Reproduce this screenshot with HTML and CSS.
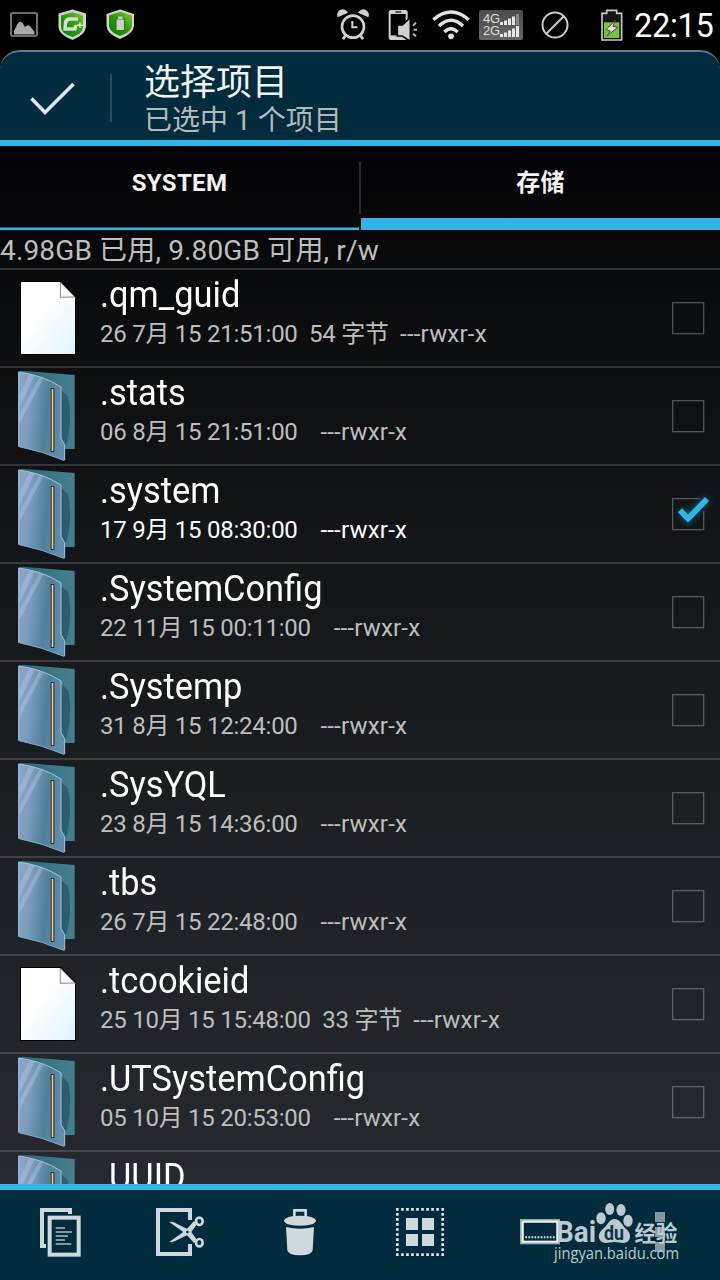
FILE: index.html
```html
<!DOCTYPE html>
<html lang="zh-CN">
<head>
  <meta charset="UTF-8">
  <title>选择项目</title>
  <link rel="stylesheet" href="styles.css">
</head>
<body>

  <!-- Shared icons -->
  <svg class="defs" width="0" height="0">
    <defs>
      <linearGradient id="front" x1="0" y1="0.1" x2="1" y2="0.3">
        <stop offset="0" stop-color="#8ba6cc"/>
        <stop offset="0.3" stop-color="#7b9bbd"/>
        <stop offset="0.65" stop-color="#4f8099"/>
        <stop offset="1" stop-color="#5f8eae"/>
      </linearGradient>
      <linearGradient id="back" x1="0" y1="0" x2="1" y2="0">
        <stop offset="0" stop-color="#2a6670"/>
        <stop offset="0.75" stop-color="#417a8a"/>
        <stop offset="1" stop-color="#457e8e"/>
      </linearGradient>
      <linearGradient id="paper" x1="0" y1="0" x2="1" y2="1">
        <stop offset="0.4" stop-color="#ffffff"/>
        <stop offset="1" stop-color="#e0f3ff"/>
      </linearGradient>
      <linearGradient id="shield-green" x1="0" y1="1" x2="1" y2="0">
        <stop offset="0" stop-color="#0d7a08"/>
        <stop offset="0.5" stop-color="#2a980d"/>
        <stop offset="1" stop-color="#7fc626"/>
      </linearGradient>
      <filter id="glow" x="-50%" y="-50%" width="200%" height="200%">
        <feGaussianBlur stdDeviation="9"/>
      </filter>
    </defs>
    <symbol id="folder" viewBox="0 0 240 288">
      <path d="M56 10L68 8L224 21V243H190L150 100Z" fill="url(#back)"/>
      <path d="M183 66L204 84Q212 120 210 160Q208 205 196 236L184 210Z" fill="#265660" opacity="0.75"/>
      <path d="M56 12Q130 22 183 57V212L194 230V278Q125 250 56 236Z" fill="url(#front)"/>
      <path d="M58 80L88 19L104 22L58 118ZM58 140L118 27L130 31L58 168Z" fill="#b9c9e6" opacity="0.4"/>
      <path d="M56 236V12Q130 22 183 57V212L194 230V276" fill="none" stroke="#a8c4df" stroke-width="3"/>
      <path d="M58 236Q125 249 192 277" fill="none" stroke="#7fa8cb" stroke-width="3"/>
      <rect x="152" y="60" width="11" height="192" rx="3" fill="#1c262e"/>
      <rect x="155" y="63" width="5" height="186" fill="#ffcb83"/>
    </symbol>
    <symbol id="file" viewBox="0 0 240 288">
      <path d="M60 33H184L228 80V255H60Z" fill="#000"/>
      <path d="M63 36H181L225 82V252H63Z" fill="url(#paper)"/>
      <path d="M181 36L225 81L181 82Z" fill="#f4f4f4" stroke="#555" stroke-width="2"/>
      <path d="M184 42L184 75L214 78Z" fill="#fff"/>
    </symbol>
    <symbol id="box" viewBox="0 0 144 144">
      <rect x="2" y="26" width="93" height="93" fill="none" stroke="#fff" stroke-opacity="0.28" stroke-width="4"/>
    </symbol>
    <symbol id="box-checked" viewBox="156 60 144 144">
      <path d="M182 122L204 146L261 86" fill="none" stroke="#087a9f" stroke-width="24" opacity="0.65" filter="url(#glow)"/>
      <path d="M239 86H158V179H251V124" fill="none" stroke="#56595b" stroke-width="4"/>
      <path d="M180 121L204 146L261 87" fill="none" stroke="#33b5e5" stroke-width="17"/>
    </symbol>
  </svg>

  <div class="status-bar">
    <div class="notifications">
      <svg width="28" height="32" viewBox="0 0 28 32">
        <rect x="1" y="4" width="26" height="23" rx="1" fill="none" stroke="#8d8d8d" stroke-width="1.6"/>
        <path d="M4 25.500V22L7 16Q10 10.500 12.500 14L15 18Q18 15 20 17L24.500 23V25.500Z" fill="#aaa"/>
      </svg>
      <svg width="28" height="32" viewBox="0 0 28 32">
        <path d="M14.500 0.500L28 4.500V18Q27 26 14.500 31Q1 26 0.500 18V4.500Z" fill="#cfd3cb"/>
        <path d="M14.500 3.300L25 6.500V18Q25 24.500 14.500 28Q3 24.500 3 18V6.500Z" fill="url(#shield-green)"/>
        <path d="M20 10H12Q8 10 7.500 14L7 20H17L17.700 16" fill="none" stroke="#d8ddd5" stroke-width="3.300"/>
        <path d="M22 13.500V19M19 16.200H25" stroke="#e6ebe3" stroke-width="1.500"/>
      </svg>
      <svg width="28" height="32" viewBox="0 0 28 32">
        <path d="M14 0.500L28 5V17Q27 25 14 30Q1 25 0.500 17V5Z" fill="#cfd3cb"/>
        <path d="M14 2.800L26 6.500V17Q25 23.500 14 27Q4 23.500 3 17V6.500Z" fill="url(#shield-green)"/>
        <rect x="10" y="10" width="8.500" height="11.500" fill="#c9d3c4" stroke="#2a6e1a"/>
        <rect x="12" y="7.600" width="4.500" height="2.400" fill="#c9d3c4"/>
      </svg>
    </div>
    <div class="signals">
      <svg class="alarm" width="32" height="32" viewBox="0 0 96 96">
        <g fill="none" stroke="#d0d0d0">
          <circle cx="48" cy="53" r="33" stroke-width="8"/>
          <path d="M46 36V55H61" stroke-width="6"/>
          <path d="M25 80L18 91M71 80L78 91" stroke-width="8"/>
        </g>
        <path d="M2 25A15 15 0 0 1 33 11ZM94 25A15 15 0 0 0 63 11Z" fill="#d0d0d0"/>
      </svg>
      <svg class="phone" width="30" height="32" viewBox="0 0 90 96">
        <rect x="2" y="3" width="57" height="90" rx="7" fill="#d0d0d0"/>
        <rect x="8" y="15" width="45" height="64" fill="#000"/>
        <rect x="22" y="7" width="18" height="4" fill="#111"/>
        <path d="M28 48H43L67 25V97L43 81H28Z" fill="#d0d0d0" stroke="#000" stroke-width="5"/>
        <path d="M75 50L84 41M77 62H87M75 74L84 82" stroke="#bbb" stroke-width="6"/>
      </svg>
      <svg class="wifi" width="38" height="32" viewBox="0 0 114 96">
        <g fill="none" stroke="#e2e2e2" stroke-width="10">
          <path d="M4 32Q57 -14 110 32"/>
          <path d="M21 51Q57 17 93 51"/>
          <path d="M37 69Q57 49 77 69"/>
        </g>
        <circle cx="57" cy="82" r="8.500" fill="#e2e2e2"/>
      </svg>
      <div class="sim">
        <div class="sim-row">4G<svg width="20" height="11" viewBox="0 0 20 11"><path d="M0 8H3V11H0ZM4 6.500H7V11H4ZM8 4.500H11V11H8ZM12 2.500H15V11H12Z" fill="#e6e6e6"/><path d="M16 0H19V11H16Z" fill="#888"/></svg></div>
        <div class="sim-row">2G<svg width="20" height="11" viewBox="0 0 20 11"><path d="M0 8H3V11H0ZM4 6.500H7V11H4ZM8 4.500H11V11H8ZM12 2.500H15V11H12ZM16 0H19V11H16Z" fill="#e6e6e6"/></svg></div>
      </div>
      <svg class="blocked" width="28" height="32" viewBox="0 0 28 32">
        <circle cx="14" cy="16" r="12.500" fill="none" stroke="#ccc" stroke-width="2"/>
        <path d="M5.500 24.500L22.500 7.500" stroke="#ccc" stroke-width="2"/>
      </svg>
      <svg class="battery" width="22" height="32" viewBox="0 0 66 96">
        <path d="M3 13H17V4H47V13H62V93H3Z" fill="#151515" stroke="#c8c8c8" stroke-width="5"/>
        <rect x="9" y="40" width="46" height="47" fill="#79c142"/>
        <path d="M43 34L15 62L28 66L18 81L50 55L36 52Z" fill="#e4e4e4" stroke="#444" stroke-width="3"/>
      </svg>
      <span class="clock">22:15</span>
    </div>
  </div>

  <div class="header">
    <svg class="done" width="110" height="88" viewBox="0 52 110 88">
      <path d="M31.500 98.500L45 112.500L73.500 84" fill="none" stroke="#dfe4e6" stroke-width="3.600"/>
    </svg>
    <div class="header-divider"></div>
    <div class="titles">
      <div class="title">选择项目</div>
      <div class="subtitle">已选中 1 个项目</div>
    </div>
  </div>

  <div class="content">
    <div class="tabs">
      <div class="tab">SYSTEM</div>
      <div class="tab-divider"></div>
      <div class="tab active">存储</div>
    </div>
    <div class="summary">4.98GB 已用, 9.80GB 可用, r/w</div>

    <div class="list">
      <div class="row">
        <svg class="icon"><use href="#file"/></svg>
        <div class="info">
          <div class="name">.qm_guid</div>
          <div class="meta">26 7月 15 21:51:00  54 字节  <span class="perms">---rwxr-x</span></div>
        </div>
        <svg class="check"><use href="#box"/></svg>
      </div>
      <div class="row">
        <svg class="icon"><use href="#folder"/></svg>
        <div class="info">
          <div class="name">.stats</div>
          <div class="meta">06 8月 15 21:51:00    <span class="perms">---rwxr-x</span></div>
        </div>
        <svg class="check"><use href="#box"/></svg>
      </div>
      <div class="row selected">
        <svg class="icon"><use href="#folder"/></svg>
        <div class="info">
          <div class="name">.system</div>
          <div class="meta">17 9月 15 08:30:00    <span class="perms">---rwxr-x</span></div>
        </div>
        <svg class="check"><use href="#box-checked"/></svg>
      </div>
      <div class="row">
        <svg class="icon"><use href="#folder"/></svg>
        <div class="info">
          <div class="name">.SystemConfig</div>
          <div class="meta">22 11月 15 00:11:00    <span class="perms">---rwxr-x</span></div>
        </div>
        <svg class="check"><use href="#box"/></svg>
      </div>
      <div class="row">
        <svg class="icon"><use href="#folder"/></svg>
        <div class="info">
          <div class="name">.Systemp</div>
          <div class="meta">31 8月 15 12:24:00    <span class="perms">---rwxr-x</span></div>
        </div>
        <svg class="check"><use href="#box"/></svg>
      </div>
      <div class="row">
        <svg class="icon"><use href="#folder"/></svg>
        <div class="info">
          <div class="name">.SysYQL</div>
          <div class="meta">23 8月 15 14:36:00    <span class="perms">---rwxr-x</span></div>
        </div>
        <svg class="check"><use href="#box"/></svg>
      </div>
      <div class="row">
        <svg class="icon"><use href="#folder"/></svg>
        <div class="info">
          <div class="name">.tbs</div>
          <div class="meta">26 7月 15 22:48:00    <span class="perms">---rwxr-x</span></div>
        </div>
        <svg class="check"><use href="#box"/></svg>
      </div>
      <div class="row">
        <svg class="icon"><use href="#file"/></svg>
        <div class="info">
          <div class="name">.tcookieid</div>
          <div class="meta">25 10月 15 15:48:00  33 字节  <span class="perms">---rwxr-x</span></div>
        </div>
        <svg class="check"><use href="#box"/></svg>
      </div>
      <div class="row">
        <svg class="icon"><use href="#folder"/></svg>
        <div class="info">
          <div class="name">.UTSystemConfig</div>
          <div class="meta">05 10月 15 20:53:00    <span class="perms">---rwxr-x</span></div>
        </div>
        <svg class="check"><use href="#box"/></svg>
      </div>
      <div class="row">
        <svg class="icon"><use href="#folder"/></svg>
        <div class="info">
          <div class="name">.UUID</div>
        </div>
      </div>
    </div>
  </div>

  <div class="toolbar">
    <!-- Copy -->
    <svg class="tool" viewBox="0 120 360 270">
      <path d="M120 174H216V192H204V186H132V282H138V294H120Z" fill="#cfd8dc"/>
      <rect x="149" y="203" width="87" height="111" fill="none" stroke="#cfd8dc" stroke-width="12"/>
      <path d="M167 234H195M167 246H216M167 258H204M167 270H195M167 282H214" stroke="#aebdc3" stroke-width="5"/>
    </svg>
    <!-- Cut -->
    <svg class="tool" viewBox="360 120 360 270">
      <path d="M570 210V180H474V312H570V282" fill="none" stroke="#cfd8dc" stroke-width="12"/>
      <path d="M508 216Q520 214 530 221L570 241L591 270L582 279L558 252Z" fill="#cfd8dc"/>
      <path d="M508 276Q520 278 530 271L570 251L591 222L582 213L558 240Z" fill="#cfd8dc"/>
      <g fill="none" stroke="#cfd8dc" stroke-width="8">
        <ellipse cx="598" cy="214" rx="10" ry="11"/>
        <ellipse cx="598" cy="278" rx="10" ry="11"/>
      </g>
      <circle cx="562" cy="246" r="4" fill="#002c3d"/>
    </svg>
    <!-- Delete -->
    <svg class="tool" viewBox="720 120 360 270">
      <path d="M883 201V181H917V201" fill="none" stroke="#cfd8dc" stroke-width="8"/>
      <path d="M852 211Q856 197 900 197Q944 197 948 211Q948 227 900 227Q852 227 852 211Z" fill="#cfd8dc"/>
      <path d="M858 231Q900 241 942 231L938 300Q936 316 900 316Q864 316 862 300Z" fill="#cfd8dc"/>
    </svg>
    <!-- Select all -->
    <svg class="tool" viewBox="0 120 360 270">
      <rect x="112" y="178" width="136" height="136" fill="none" stroke="#dfe6e8" stroke-width="8" stroke-dasharray="8 7.111" stroke-dashoffset="4"/>
      <path d="M138 204H174V240H138ZM186 204H222V240H186ZM138 252H174V288H138ZM186 252H222V288H186Z" fill="#cfd8dc"/>
    </svg>
    <!-- Rename -->
    <svg class="tool" viewBox="360 120 360 270">
      <rect x="485" y="212" width="110" height="66" fill="none" stroke="#99a9b0" stroke-width="10"/>
      <rect x="488" y="215" width="104" height="60" fill="none" stroke="#f2f5f6" stroke-width="6"/>
      <path d="M496 262H584" stroke="#e8eeef" stroke-width="6" stroke-dasharray="5 4.200"/>
    </svg>
    <!-- More -->
    <svg class="tool" viewBox="720 120 360 270">
      <path d="M885 186H915V216H885ZM885 231H915V261H885ZM885 276H915V306H885Z" fill="#82979f"/>
    </svg>

    <div class="watermark">
      <svg width="140" height="72" viewBox="550 1200 140 72">
        <g fill="#bdc9ce">
          <text class="wm-latin" x="556" y="1242" textLength="40" lengthAdjust="spacingAndGlyphs">Bai</text>
          <ellipse cx="601" cy="1218.300" rx="4.700" ry="6"/>
          <ellipse cx="609.700" cy="1209" rx="4.500" ry="6"/>
          <ellipse cx="621" cy="1210" rx="4.600" ry="6"/>
          <ellipse cx="628" cy="1220.700" rx="4.700" ry="6"/>
          <path d="M614.500 1219C620 1219 622 1225 626 1229C630 1232 631 1237 629 1240C626 1245 620 1242 614.500 1242C609 1242 603 1245 600 1240C597 1236 600 1231 604 1228C608 1225 609 1219 614.500 1219Z"/>
          <text class="wm-cjk" x="634.500" y="1240.500" textLength="43" lengthAdjust="spacingAndGlyphs">经验</text>
          <text class="wm-url" x="554" y="1259" textLength="125" lengthAdjust="spacingAndGlyphs">jingyan.baidu.com</text>
        </g>
        <text class="wm-du" x="604" y="1239.500" textLength="20" lengthAdjust="spacingAndGlyphs">du</text>
      </svg>
    </div>
  </div>

</body>
</html>
```
FILE: styles.css
```css
body {
  margin: 0;
  width: 720px;
  height: 1280px;
  display: flex;
  flex-direction: column;
  overflow: hidden;
  background: #000;
  color: #fff;
  font-family: Roboto, "Noto Sans CJK SC", sans-serif;
}

svg {
  display: block;
  flex: none;
}

.defs {
  position: absolute;
}

/* Status bar */
.status-bar {
  flex: none;
  height: 50px;
  box-sizing: border-box;
  padding: 0 7px 0 10px;
  display: flex;
  justify-content: space-between;
  align-items: center;
}

.notifications {
  display: flex;
  gap: 20px;
}

.signals {
  display: flex;
  align-items: center;
}

.alarm {
  margin-right: 19px;
}

.phone {
  margin-right: 14px;
}

.wifi {
  margin-right: 9px;
}

.sim {
  width: 44px;
  height: 30px;
  box-sizing: border-box;
  padding: 3px 0 0 4px;
  margin-right: 18px;
  border-radius: 2px;
  background: linear-gradient(#4a4a4a, #666);
}

.sim-row {
  display: flex;
  align-items: center;
  height: 12px;
  font: 13px/12px "Liberation Sans", sans-serif;
  letter-spacing: -0.3px;
  color: #ddd;
}

.blocked {
  margin-right: 32px;
}

.battery {
  margin-right: 11px;
}

.clock {
  width: 79px;
  font-size: 32.5px;
  letter-spacing: -0.3px;
  line-height: 50px;
  padding-top: 2px;
  white-space: nowrap;
}

/* Header */
.header {
  flex: none;
  height: 96px;
  box-sizing: border-box;
  display: flex;
  align-items: center;
  background: #002c3d;
  border-top: 2px solid #5d818d;
  border-bottom: 6px solid #33b5e5;
  border-radius: 20px 20px 0 0;
}

.header-divider {
  width: 2px;
  height: 48px;
  margin-top: 4px;
  background: #284c5b;
}

.titles {
  padding: 8px 0 0 32px;
}

.title {
  font-size: 36px;
  line-height: 42px;
  color: #f3f3f3;
}

.subtitle {
  font-size: 28px;
  line-height: 34px;
  color: #b5b9ba;
}

/* List area */
.content {
  flex: 1;
  min-height: 0;
  overflow: hidden;
  background: linear-gradient(#020204, #0b0c0e 16%, #14171a 43%, #1b1f22 63%, #262a30);
}

.tabs {
  display: flex;
  height: 84px;
}

.tab {
  flex: 1;
  box-sizing: border-box;
  height: 84px;
  font-size: 24px;
  font-weight: bold;
  letter-spacing: 0.3px;
  line-height: 74px;
  text-align: center;
  color: #f3f3f3;
  border-bottom: 2px solid #33b5e5;
  box-shadow: inset 0 -1px #1d5b70;
}

.tab.active {
  border-bottom-width: 12px;
  box-shadow: none;
}

.tab-divider {
  width: 2px;
  height: 52px;
  margin-top: 16px;
  background: #2b2b2d;
}

.summary {
  height: 38px;
  font-size: 28px;
  letter-spacing: 0.15px;
  line-height: 42px;
  color: #bebebe;
  border-bottom: 2px solid #303234;
}

.row {
  display: flex;
  height: 96px;
  border-bottom: 2px solid rgba(255, 255, 255, 0.15);
}

.icon {
  width: 80px;
  height: 96px;
}

.info {
  flex: 1;
  padding-left: 20px;
}

.name {
  font-size: 36px;
  line-height: 42px;
  padding-top: 4px;
  transform: scaleX(0.955);
  transform-origin: left;
}

.meta {
  font-size: 24px;
  line-height: 36px;
  letter-spacing: -0.25px;
  white-space: pre;
  color: #bebebe;
}

.perms {
  letter-spacing: 0.2px;
}

.selected .meta {
  color: #fff;
}

.check {
  width: 48px;
  height: 48px;
  margin-top: 24px;
}

/* Bottom toolbar */
.toolbar {
  position: relative;
  flex: none;
  display: flex;
  height: 90px;
  background: #002c3d;
  border-top: 6px solid #33b5e5;
}

.tool {
  width: 120px;
  height: 90px;
}

.watermark {
  position: absolute;
  left: 550px;
  top: 10px;
}

.wm-latin {
  font: bold 29px Roboto, sans-serif;
}

.wm-du {
  font: bold 20px Roboto, sans-serif;
  fill: #0b3546;
}

.wm-cjk {
  font: bold 22px "Noto Sans CJK SC", sans-serif;
}

.wm-url {
  font: 16px "Open Sans", sans-serif;
}
```
